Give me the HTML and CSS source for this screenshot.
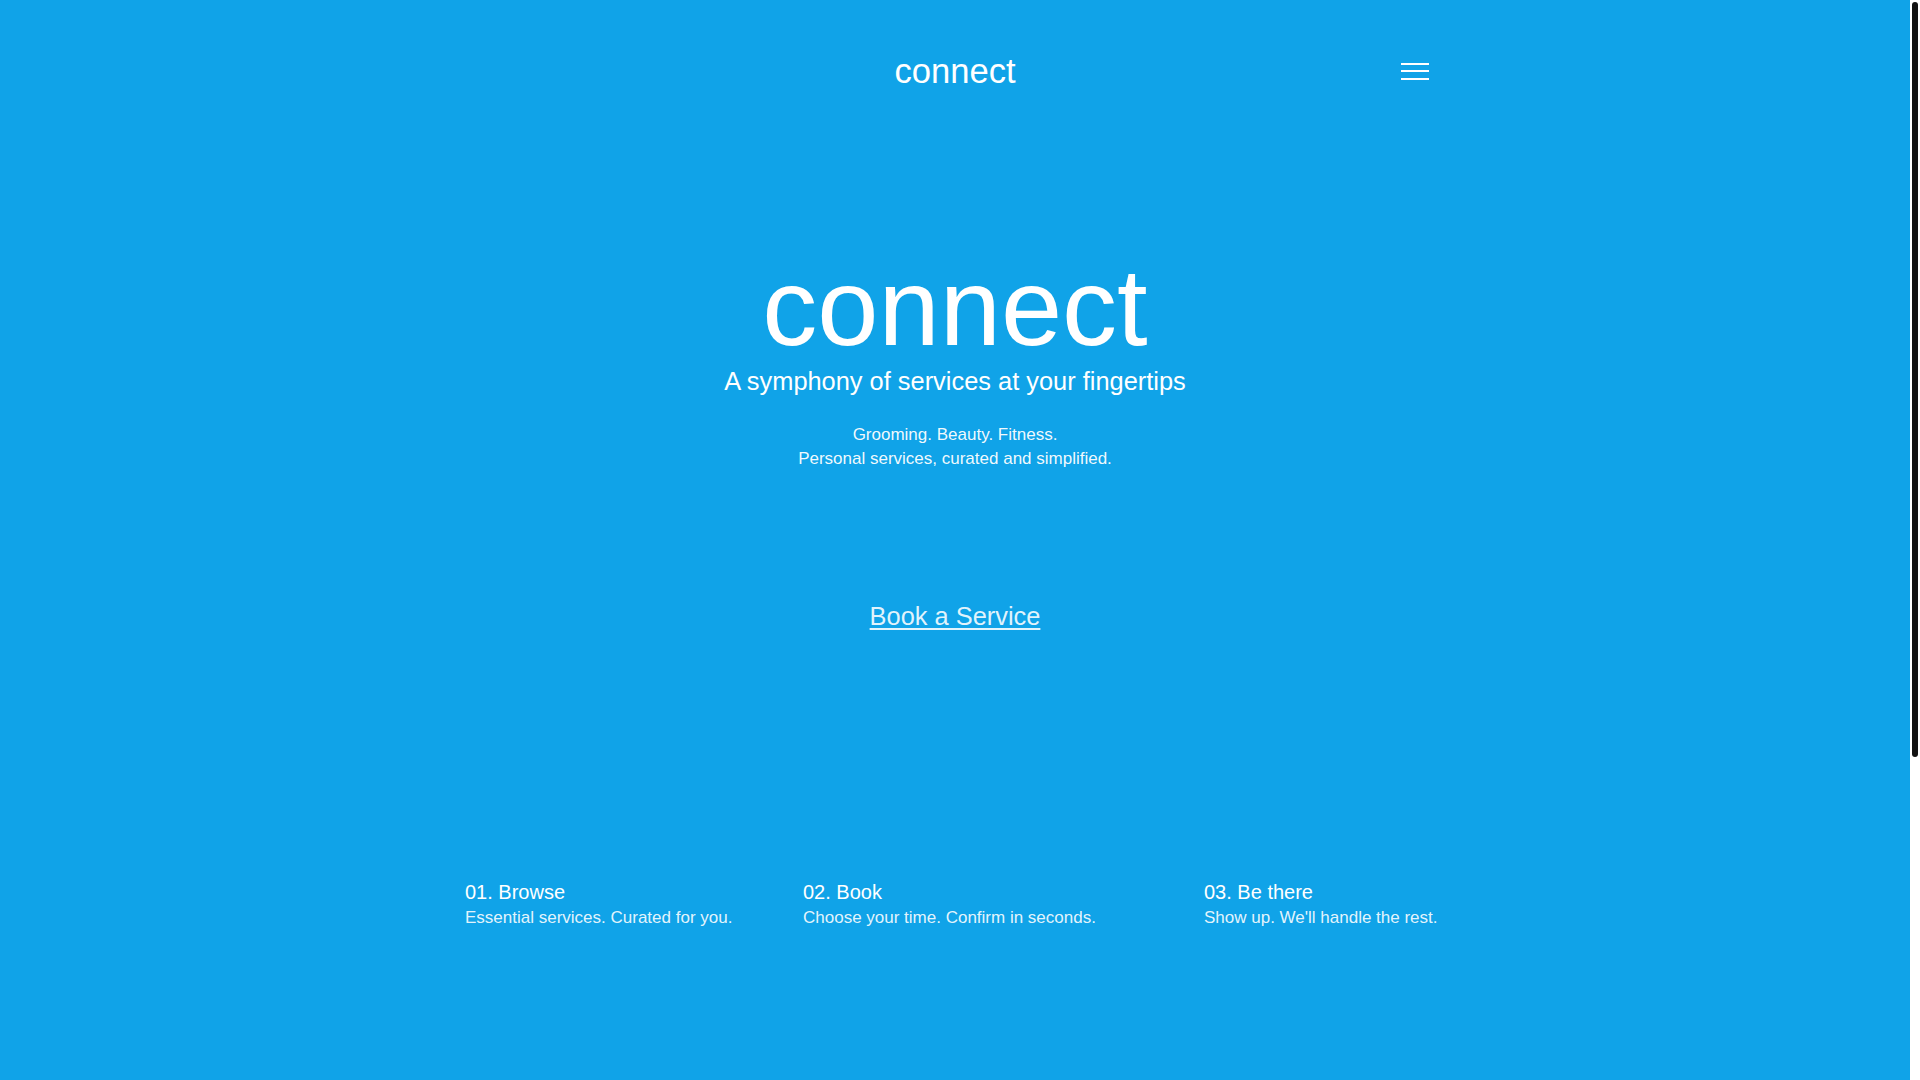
FILE: index.html
```html
<!DOCTYPE html>
<html lang="en">
<head>
<meta charset="utf-8">
<title>connect</title>
<link rel="stylesheet" href="styles.css">
</head>
<body>
<header class="site-header">
  <div class="header-inner">
    <span class="header-spacer"></span>
    <a class="brand" href="#">connect</a>
    <button class="menu-btn" aria-label="Menu">
      <span class="bar"></span>
      <span class="bar"></span>
      <span class="bar"></span>
    </button>
  </div>
</header>
<main class="hero">
  <h1 class="hero-title">connect</h1>
  <p class="hero-sub">A symphony of services at your fingertips</p>
  <p class="hero-text">Grooming. Beauty. Fitness.<br>Personal services, curated and simplified.</p>
  <a class="cta" href="#">Book a Service</a>
</main>
<section class="steps">
  <div class="step">
    <h3 class="step-title">01. Browse</h3>
    <p class="step-desc">Essential services. Curated for you.</p>
  </div>
  <div class="step">
    <h3 class="step-title">02. Book</h3>
    <p class="step-desc">Choose your time. Confirm in seconds.</p>
  </div>
  <div class="step">
    <h3 class="step-title">03. Be there</h3>
    <p class="step-desc">Show up. We'll handle the rest.</p>
  </div>
</section>
<div class="scrollbar" aria-hidden="true"><div class="scroll-thumb"></div></div>
</body>
</html>
```
FILE: styles.css
```css
html {
  background: #10a3e8;
}
body {
  margin: 0;
  padding-right: 10px;
  background: #10a3e8;
  color: #ffffff;
  font-family: "Liberation Sans", Arial, sans-serif;
}
.scrollbar {
  position: fixed;
  top: 0;
  right: 0;
  width: 10px;
  height: 100vh;
  background: #ffffff;
}
.scroll-thumb {
  margin: 2px 2px 0;
  width: 6px;
  height: 755px;
  background: #111111;
  border-radius: 3px;
}
.site-header {
  padding-top: 51px;
}
.header-inner {
  width: 948px;
  margin: 0 auto;
  display: grid;
  grid-template-columns: 1fr auto 1fr;
  align-items: center;
  height: 40px;
}
.brand {
  font-size: 34.6px;
  line-height: 40px;
  color: #ffffff;
  text-decoration: none;
}
.menu-btn {
  justify-self: end;
  width: 28px;
  padding: 0;
  margin: 0;
  border: 0;
  background: transparent;
  display: flex;
  flex-direction: column;
  gap: 5.5px;
  cursor: pointer;
}
.bar {
  display: block;
  width: 28px;
  height: 2px;
  background: #ffffff;
}
.hero {
  text-align: center;
  padding-top: 160px;
}
.hero-title {
  margin: 0;
  font-size: 110px;
  line-height: 112px;
  font-weight: 400;
}
.hero-sub {
  margin: 3px 0 0;
  font-size: 25.4px;
  line-height: 30.7px;
}
.hero-text {
  margin: 26.5px 0 0;
  font-size: 17px;
  line-height: 24px;
  color: rgba(255, 255, 255, 0.95);
}
.cta {
  display: inline-block;
  margin-top: 130px;
  font-size: 25.4px;
  line-height: 30.7px;
  color: rgba(255, 255, 255, 0.88);
  text-decoration: underline;
  text-underline-offset: 3px;
}
.steps {
  width: 980px;
  margin: 0 auto;
  padding: 248px 0 615px;
  box-sizing: border-box;
  display: grid;
  grid-template-columns: 338px 401px 1fr;
}
.step-title {
  margin: 0;
  font-size: 20px;
  line-height: 24px;
  font-weight: 400;
}
.step-desc {
  margin: 2px 0 0;
  font-size: 17px;
  line-height: 24px;
  color: rgba(255, 255, 255, 0.9);
}
```
